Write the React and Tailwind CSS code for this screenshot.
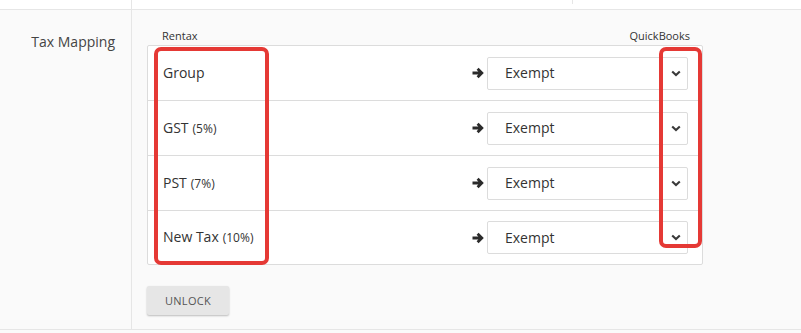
import React from "react";

const rows = [
  { name: "Group", pct: null },
  { name: "GST", pct: "(5%)" },
  { name: "PST", pct: "(7%)" },
  { name: "New Tax", pct: "(10%)" },
];

function Arrow() {
  return (
    <svg width="12" height="12" viewBox="0 0 12 12" className="text-[#2b2b2b]">
      <path d="M0.5 6h8.5M5.6 1.8l4.2 4.2-4.2 4.2" fill="none" stroke="currentColor" strokeWidth="2.8" strokeLinecap="butt" strokeLinejoin="miter" />
    </svg>
  );
}

function Chevron() {
  return (
    <svg width="10" height="7" viewBox="0 0 10 7" className="text-[#3a3a3a]">
      <path d="M1.2 1.5l3.8 3.6 3.8-3.6" fill="none" stroke="currentColor" strokeWidth="2.1" />
    </svg>
  );
}

export default function App() {
  return (
    <div
      className="relative w-[801px] h-[333px] overflow-hidden bg-[#fafafa] text-[#333]"
      style={{ fontFamily: '"Open Sans", "Noto Sans", sans-serif' }}
    >
      <div className="flex h-[10px] bg-white border-b border-[#e6e6e6]">
        <div className="w-[132px] border-r border-[#e6e6e6]" />
        <div className="w-[441px] h-[4px] border-r border-[#e6e6e6]" />
      </div>
      <div className="flex h-[320px] border-b border-[#e6e6e6]">
        <div className="w-[132px] shrink-0 border-r border-[#e6e6e6] pr-[16px] pt-[23px] text-right text-[14px] leading-[18px] text-[#444]">
          Tax Mapping
        </div>
        <div className="pl-[15px] w-[572px]">
          <div className="flex items-end justify-between h-[35px] pb-[3px] pl-[15px] pr-[14px] text-[11px] leading-[13px] text-[#333]">
            <span>Rentax</span>
            <span>QuickBooks</span>
          </div>
          <div className="w-[556px] h-[220px] bg-white border border-[#dcdcdc] rounded-[2px] flex flex-col">
            {rows.map((r, i) => (
              <div
                key={r.name}
                className={
                  "flex items-center pl-[15px] pr-[14px] " +
                  (i < rows.length - 1 ? "h-[55px] border-b border-[#dcdcdc]" : "flex-1")
                }
              >
                <div className="flex-1 text-[14px] leading-[18px]">
                  {r.name}
                  {r.pct && <span className="text-[12px] ml-[4px]">{r.pct}</span>}
                </div>
                <div className="flex items-center gap-[3px]">
                  <Arrow />
                  <div className="flex items-center justify-between w-[201px] h-[33px] border border-[#dcdcdc] rounded-[2px] bg-white pl-[17px] pr-[6px]">
                    <span className="text-[14px] leading-[18px]">Exempt</span>
                    <Chevron />
                  </div>
                </div>
              </div>
            ))}
          </div>
          <button className="block mt-[21px] w-[82px] h-[29px] bg-[#e6e6e6] rounded-[2px] shadow-[0_1px_2px_rgba(0,0,0,0.25)] text-[11px] leading-[13px] text-[#555] tracking-[0.3px]">
            UNLOCK
          </button>
        </div>
      </div>

      <div className="absolute left-[154px] top-[47px] w-[115px] h-[218px] border-[4px] border-[#e53935] rounded-[7px]" />
      <div className="absolute left-[659px] top-[47px] w-[43px] h-[201px] border-[4px] border-[#e53935] rounded-[7px]" />
    </div>
  );
}
